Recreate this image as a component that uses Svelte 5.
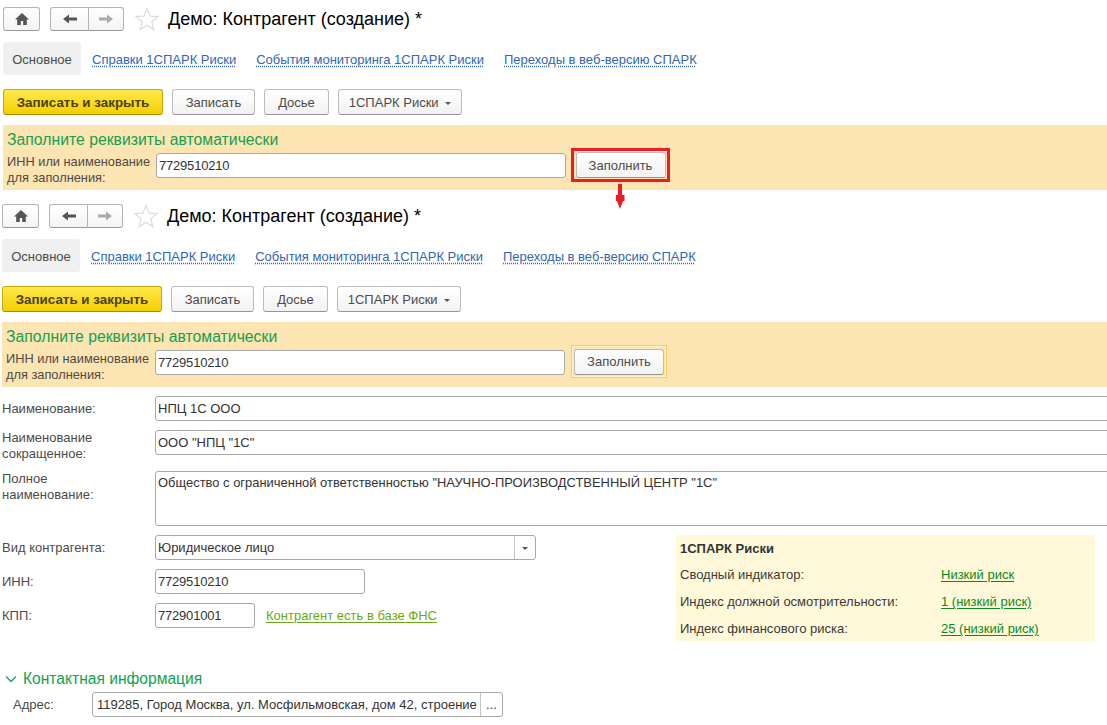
<script>
  const tabs = ['Справки 1СПАРК Риски', 'События мониторинга 1СПАРК Риски', 'Переходы в веб-версию СПАРК'];
</script>

{#snippet head(marked)}
  <div class="nav">
    <button class="ib home" aria-label="Домой">
      <svg width="16" height="14" viewBox="0 0 16 14"><path d="M8 1 1 7.6h2.2V13h3.6V9h2.4v4h3.6V7.6H15z" fill="#555"/></svg>
    </button>
    <div class="pair">
      <button class="ib" aria-label="Назад"><svg width="16" height="12" viewBox="0 0 16 12"><path d="M1 6 7 1.5V4.5h8v3H7v3z" fill="#555"/></svg></button>
      <button class="ib" aria-label="Вперёд"><svg width="16" height="12" viewBox="0 0 16 12"><path d="M15 6 9 1.5V4.5H1v3h8v3z" fill="#aaa"/></svg></button>
    </div>
    <svg class="star" width="26" height="26" viewBox="0 0 26 26"><path d="M13 2.500l3 7.600 8 .5-6.200 5.100 2.100 7.900L13 19.200 6.100 23.600l2.100-7.900L2 10.600l8-.5z" fill="none" stroke="#dcdcdc" stroke-width="1.200"/></svg>
    <h1>Демо: Контрагент (создание) *</h1>
  </div>
  <div class="tabs">
    <span class="tab">Основное</span>
    {#each tabs as t}<a class="tablink" href="#t">{t}</a>{/each}
  </div>
  <div class="actions">
    <button class="btn primary">Записать и закрыть</button>
    <button class="btn w-zap">Записать</button>
    <button class="btn w-dos">Досье</button>
    <button class="btn w-spark">1СПАРК Риски <i class="caret"></i></button>
  </div>
  <section class="banner">
    <h2>Заполните реквизиты автоматически</h2>
    <div class="fillrow">
      <span class="filllabel">ИНН или наименование<br />для заполнения:</span>
      <div class="field fillinput num">7729510210</div>
      <div class="frame" class:marked>
        <button class="btn fillbtn">Заполнить</button>
      </div>
    </div>
  </section>
{/snippet}

<main>
  <div class="block first">
    {@render head(true)}
    <svg class="arrow" width="10" height="26" viewBox="0 0 10 26"><path d="M3 0h4v11h2.500v6h-1.500l-3 8-3-8H1v-6h2z" fill="#ed1c24"/></svg>
  </div>
  <div class="block second">
    {@render head(false)}
    <div class="form">
      <div class="row r1"><label>Наименование:</label><div class="field grow">НПЦ 1С ООО</div></div>
      <div class="row r2"><label>Наименование<br />сокращенное:</label><div class="field grow">ООО "НПЦ "1С"</div></div>
      <div class="row r3"><label>Полное<br />наименование:</label><div class="field grow area">Общество с ограниченной ответственностью "НАУЧНО-ПРОИЗВОДСТВЕННЫЙ ЦЕНТР "1С"</div></div>
      <div class="lower">
        <div class="left">
          <div class="row"><label>Вид контрагента:</label>
            <div class="field select"><span>Юридическое лицо</span><span class="selbtn"><i class="caret"></i></span></div>
          </div>
          <div class="row"><label>ИНН:</label><div class="field inn num">7729510210</div></div>
          <div class="row"><label>КПП:</label><div class="field kpp num">772901001</div><a class="fns" href="#f">Контрагент есть в базе ФНС</a></div>
        </div>
        <aside class="risk">
          <b>1СПАРК Риски</b>
          <div class="rr"><span>Сводный индикатор:</span><a href="#r">Низкий риск</a></div>
          <div class="rr"><span>Индекс должной осмотрительности:</span><a href="#r">1 (низкий риск)</a></div>
          <div class="rr"><span>Индекс финансового риска:</span><a href="#r">25 (низкий риск)</a></div>
        </aside>
      </div>
      <div class="contact">
        <svg width="12" height="8" viewBox="0 0 12 8"><path d="M1 1.500l5 5 5-5" fill="none" stroke="#1aa260" stroke-width="1.300"/></svg>
        <span>Контактная информация</span>
      </div>
      <div class="addr">
        <label>Адрес:</label>
        <div class="field addrf"><span class="addrtext">119285, Город Москва, ул. Мосфильмовская, дом 42, строение</span><span class="more">...</span></div>
      </div>
    </div>
  </div>
</main>

<style>
  :global(body) { margin: 0; background: #fff; overflow: hidden; }
  main {
    font: 13px "Liberation Sans", Arial, sans-serif;
    color: #4b4b4b;
    height: 725px;
    overflow: hidden;
  }
  .block { position: relative; }
  .first { padding: 7px 0 0 3px; height: 190px; box-sizing: content-box; }
  .second { padding: 7px 0 0 2px; }
  button { font: inherit; margin: 0; }

  .nav { display: flex; align-items: center; height: 24px; }
  .ib {
    width: 37px; height: 24px; padding: 0; display: flex; align-items: center; justify-content: center;
    background: linear-gradient(#fff, #f4f4f4); border: 1px solid #b4b4b4; border-bottom-color: #989898;
    border-radius: 3px; box-sizing: border-box;
  }
  .home { width: 37px; margin-right: 10px; margin-left: 0; }
  .pair { display: flex; width: 74px; }
  .pair .ib { width: 37px; }
  .pair .ib:first-child { border-radius: 3px 0 0 3px; border-right: 0; width: 38px; }
  .pair .ib:last-child { border-radius: 0 3px 3px 0; width: 36px; }
  .star { margin: 0 8px 0 10px; }
  h1 { margin: 0; font-size: 18px; font-weight: 400; color: #000; line-height: 26px; white-space: nowrap; }

  .tabs { display: flex; align-items: center; margin-top: 11px; height: 33px; }
  .tab { width: 78px; height: 33px; line-height: 35px; text-align: center; background: #f0f0f0; border-radius: 3px; margin-right: 11px; }
  .tablink { color: #3166b3; text-decoration: underline dotted #3166b3; text-underline-offset: 2px; margin-right: 20px; white-space: nowrap; position: relative; top: 1px; }

  .actions { display: flex; margin-top: 14px; gap: 9px; height: 26px; }
  .btn {
    height: 26px; padding: 0; box-sizing: border-box; color: #4b4b4b;
    background: linear-gradient(#fff, #f2f2f2); border: 1px solid #bcbcbc; border-bottom-color: #959595; border-radius: 3px;
    white-space: nowrap;
  }
  .primary {
    width: 160px; font-weight: 700; font-size: 13.4px; color: #4a4210;
    background: linear-gradient(#ffe94d, #f5cd00); border-color: #c9a800 #c9a800 #a88c00;
  }
  .w-zap { width: 83px; margin-left: 0; }
  .w-dos { width: 65px; }
  .w-spark { width: 124px; }
  .caret { display: inline-block; width: 0; height: 0; border: 3px solid transparent; border-top: 3px solid #555; border-bottom: 0; vertical-align: 2px; margin-left: 3px; }

  .banner { margin-top: 10px; height: 65px; background: #fde5b3; padding: 0 0 0 4px; box-sizing: border-box; }
  h2 { margin: 0; font-size: 15.77px; font-weight: 400; color: #12a150; line-height: 20px; padding: 5px 0 0 0; }
  .fillrow { display: flex; align-items: flex-start; margin-top: 3px; }
  .filllabel { width: 149px; font-size: 12.8px; line-height: 15.5px; margin-top: 1px; white-space: nowrap; color: #4f4a44; }
  .field {
    height: 25px; box-sizing: border-box; line-height: 23px; background: #fff; color: #333;
    border: 1px solid #a8a8a8; border-radius: 3px; padding: 0 2px; white-space: nowrap; overflow: hidden;
  }
  .num { letter-spacing: -0.2px; }
  .fillinput { width: 410px; }
  .frame { margin: -5px 0 0 5px; width: 99px; height: 34px; box-sizing: border-box; border: 3px solid transparent; display: flex; align-items: center; justify-content: center; }
  .frame.marked { border-color: #ed1c24; }
  .second .frame { width: 96px; height: 33px; border: 1px solid #f5cf5a; box-shadow: inset 0 0 0 1px #fff3c4; margin-left: 6px; }
  .fillbtn { width: 90px; }

  .arrow { position: absolute; left: 615px; top: 184px; }

  .row { display: flex; align-items: center; height: 25px; }
  .row label, .addr label { width: 153px; flex: none; line-height: 16px; color: #4b4b4b; }
  .grow { flex: 1; margin-right: -6px; }
  .r1 { margin-top: 9px; }
  .r2 { margin-top: 9px; align-items: flex-start; height: 32px; }
  .r3 { margin-top: 9px; align-items: flex-start; height: 55px; }
  .area { height: 55px; white-space: normal; line-height: 16px; padding-top: 3px; font-size: 12.95px; }

  .lower { display: flex; margin-top: 9px; height: 106px; }
  .left { width: 674px; display: flex; flex-direction: column; gap: 9px; }
  .select { width: 381px; display: flex; justify-content: space-between; padding-right: 0; }
  .selbtn { width: 20px; border-left: 1px solid #c4c4c4; text-align: center; }
  .selbtn .caret { margin: 0; vertical-align: 2px; }
  .inn { width: 210px; }
  .kpp { width: 100px; }
  .fns { margin-left: 11px; color: #6aa815; text-decoration: underline; text-underline-offset: 2px; }
  .risk { width: 419px; height: 106px; background: #fff9d9; padding: 6px 4px; box-sizing: border-box; display: flex; flex-direction: column; color: #3a3a3a; }
  .risk b { line-height: 16px; color: #333; }
  .rr { display: flex; margin-top: 11px; line-height: 16px; }
  .rr:nth-of-type(1) { margin-top: 10px; }
  .rr span { width: 261px; }
  .rr a { color: #0b8a1e; text-decoration: underline; text-underline-offset: 2px; }

  .contact { display: flex; align-items: center; margin-top: 28px; height: 20px; padding-left: 3px; color: #12a150; font-size: 15.6px; gap: 6px; }
  .addr { display: flex; align-items: center; margin-top: 3px; padding-left: 11px; }
  .addr label { width: 79px; }
  .addrf { width: 411px; display: flex; padding: 0 0 0 4px; }
  .addrtext { flex: 1; overflow: hidden; }
  .more { width: 21px; border-left: 1px solid #c4c4c4; text-align: center; flex: none; }
</style>
